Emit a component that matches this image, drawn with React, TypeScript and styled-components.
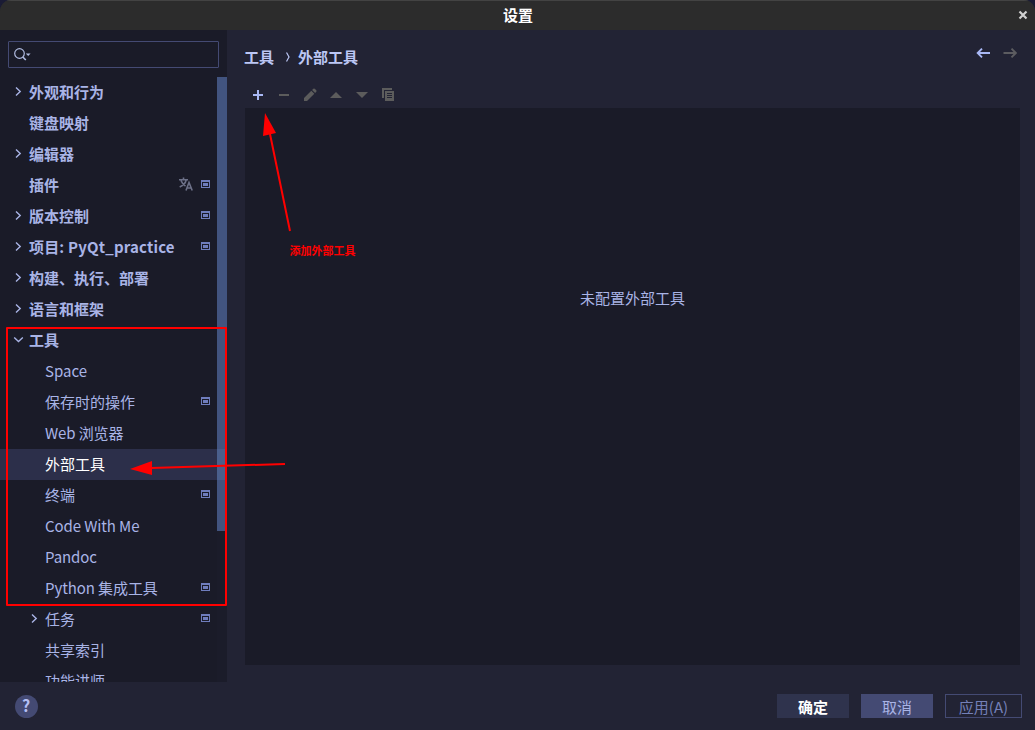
import React from 'react';
import styled, { createGlobalStyle } from 'styled-components';

const Global = createGlobalStyle`
  * { box-sizing: border-box; }
  body { margin: 0; background: #1a1b35; overflow: hidden; }
  svg { display: block; flex: none; }
`;

const Window = styled.div`
  position: relative;
  width: 1035px;
  height: 730px;
  display: flex;
  flex-direction: column;
  overflow: hidden;
  border-radius: 11px 11px 0 0;
  background: #222334;
  color: #a9b4e6;
  font: 15px/31px 'Noto Sans CJK SC', sans-serif;
`;

const TitleBar = styled.header`
  display: grid;
  grid-template-columns: 1fr auto 1fr;
  align-items: center;
  height: 30px;
  flex: none;
  padding: 0 7px 2px 0;
  background: #2c2c2c;
  border-top: 1px solid #434343;
  color: #fff;
  font-weight: 700;
  line-height: 27px;
  svg { justify-self: end; }
`;

const Title = styled.span`
  grid-column: 2;
  padding-left: 8px;
`;

const Body = styled.div`
  display: flex;
  height: 652px;
  flex: none;
`;

const Sidebar = styled.aside`
  width: 227px;
  flex: none;
  padding-top: 11px;
  background: #1a1b28;
  overflow: hidden;
`;

const Search = styled.div`
  display: flex;
  align-items: center;
  width: 211px;
  height: 27px;
  margin: 0 0 9px 8px;
  padding-left: 5px;
  border: 1px solid #444a73;
  border-radius: 1px;
`;

const TreeArea = styled.div`
  display: flex;
  height: 605px;
  overflow: hidden;
`;

const Tree = styled.div`
  width: 217px;
  flex: none;
`;

const Track = styled.div`
  width: 10px;
  height: 605px;
  background: #1b1c2a;
`;

const Thumb = styled.div`
  height: 454px;
  padding-top: 372px;
  background: #42547f;
`;

const ThumbHighlight = styled.div`
  height: 31px;
  background: #4a5f8c;
`;

const Row = styled.div<{ $child?: boolean; $selected?: boolean }>`
  display: flex;
  align-items: center;
  height: 31px;
  padding: 0 7px 0 ${p => (p.$child ? 29 : 13)}px;
  background: ${p => (p.$selected ? '#2c2f4a' : 'transparent')};
  color: ${p => (p.$selected ? '#fff' : '#a9b4e6')};
  font-weight: ${p => (p.$child ? 400 : 700)};
  white-space: nowrap;
`;

const Toggle = styled.span`
  display: flex;
  width: 16px;
  flex: none;
  padding-bottom: 2px;
`;

const Label = styled.span<{ $spacing?: number }>`
  flex: 1;
  padding-bottom: 2px;
  line-height: 29px;
  letter-spacing: ${p => p.$spacing ?? 0}px;
`;

const Marks = styled.span`
  display: flex;
  align-items: center;
  gap: 8px;
  padding-bottom: 3px;
`;

const Content = styled.main`
  display: flex;
  flex-direction: column;
  flex: 1;
  padding: 0 15px 17px 18px;
`;

const Heading = styled.div`
  display: flex;
  align-items: center;
  height: 54px;
  color: #bcc7f5;
  font-weight: 700;
  line-height: 30px;
`;

const Crumb = styled.span`
  margin-left: -1px;
`;

const Separator = styled.span`
  margin: 0 8px 0 12px;
`;

const History = styled.span`
  display: flex;
  gap: 13px;
  margin: 0 3px 8px auto;
`;

const Toolbar = styled.div`
  display: flex;
  gap: 10px;
  height: 24px;
  padding: 3px 0 0 5px;
`;

const Panel = styled.section`
  flex: 1;
  padding-top: 175px;
  background: #1a1b28;
  text-align: center;
  line-height: 30px;
`;

const Footer = styled.footer`
  display: flex;
  align-items: center;
  height: 48px;
  padding: 0 13px 0 15px;
`;

const Help = styled.button`
  display: grid;
  place-items: center;
  width: 23px;
  height: 23px;
  margin-right: auto;
  padding: 0 1px 2px 0;
  border: 0;
  border-radius: 50%;
  background: #444a73;
  color: #b4c0f5;
  font: 700 16px/21px 'Noto Sans CJK SC', sans-serif;
`;

const Button = styled.button<{ $kind: 'default' | 'normal' | 'disabled' }>`
  width: ${p => (p.$kind === 'disabled' ? 77 : 72)}px;
  height: 24px;
  margin-left: 12px;
  padding: 1px 0 0;
  border: ${p => (p.$kind === 'disabled' ? '1px solid #444a73' : '0')};
  background: ${p => ({ default: '#2f334d', normal: '#444a73', disabled: 'transparent' })[p.$kind]};
  color: ${p => ({ default: '#fff', normal: '#a9b4e6', disabled: '#7480b8' })[p.$kind]};
  font: ${p => (p.$kind === 'default' ? 700 : 400)} 15px/22px 'Noto Sans CJK SC', sans-serif;
`;

const SelectionFrame = styled.div`
  position: absolute;
  left: 6px;
  top: 327px;
  width: 221px;
  height: 279px;
  border: 2px solid #f00;
  border-radius: 1px;
`;

const Arrows = styled.svg`
  position: absolute;
  left: 0;
  top: 0;
`;

const Note = styled.div`
  position: absolute;
  left: 289.5px;
  top: 242px;
  color: #f00;
  font: 700 11px/16px 'Noto Sans CJK SC', sans-serif;
`;

const Chevron = ({ open }: { open?: boolean }) => (
  <svg width="11" height="11" viewBox="0 0 11 11" fill="none" stroke="#a9b4e6" strokeWidth="1.4">
    <path d={open ? 'M1.2 3.5 5.5 7.5 9.8 3.5' : 'M3 1.5 7.2 5.5 3 9.5'} />
  </svg>
);

const ProjectMark = () => (
  <svg width="9" height="8" viewBox="0 0 9 8" fill="#6f7dbd">
    <path fillRule="evenodd" d="M0 0h9v8H0zM1 2v5h7V2z" />
    <path d="M2 3h5v3H2z" />
  </svg>
);

const LanguageMark = () => (
  <svg width="14" height="14" viewBox="0 0 14 14" fill="none" stroke="#6c7087" strokeWidth="1.6">
    <path d="M0 2.7h9M4.500.500v2.200M2 3.500c1 3 3 4.500 4.500 5.500M7.200 3C6.500 6 4 8.500.700 10M7 13.500 10 5.500 13.200 13.500M8.300 11h4" />
  </svg>
);

type Item = {
  text: string;
  child?: boolean;
  toggle?: 'open' | 'closed';
  mark?: boolean;
  language?: boolean;
  selected?: boolean;
  spacing?: number;
};

const items: Item[] = [
  { text: '外观和行为', toggle: 'closed' },
  { text: '键盘映射' },
  { text: '编辑器', toggle: 'closed' },
  { text: '插件', mark: true, language: true },
  { text: '版本控制', toggle: 'closed', mark: true },
  { text: '项目: PyQt_practice', toggle: 'closed', mark: true, spacing: 0.18 },
  { text: '构建、执行、部署', toggle: 'closed' },
  { text: '语言和框架', toggle: 'closed' },
  { text: '工具', toggle: 'open' },
  { text: 'Space', child: true },
  { text: '保存时的操作', child: true, mark: true },
  { text: 'Web 浏览器', child: true, spacing: -0.1 },
  { text: '外部工具', child: true, selected: true },
  { text: '终端', child: true, mark: true },
  { text: 'Code With Me', child: true, spacing: -0.1 },
  { text: 'Pandoc', child: true, spacing: -0.1 },
  { text: 'Python 集成工具', child: true, mark: true, spacing: -0.08 },
  { text: '任务', child: true, toggle: 'closed', mark: true },
  { text: '共享索引', child: true },
  { text: '功能讲师', child: true },
];

export default function App() {
  return (
    <>
      <Global />
      <Window>
        <TitleBar>
          <Title>设置</Title>
          <svg width="10" height="10" viewBox="0 0 10 10" stroke="#d0d0d0" strokeWidth="2.2">
            <path d="M1.500 1.500 8.500 8.500M8.500 1.500 1.500 8.500" />
          </svg>
        </TitleBar>
        <Body>
          <Sidebar>
            <Search>
              <svg width="17" height="14" viewBox="0 0 17 14" fill="none" stroke="#b0bbe0" strokeWidth="1.200">
                <circle cx="5.500" cy="5.500" r="4.800" />
                <path d="m8.800 9 3 3" strokeWidth="1.700" />
                <path d="M11.800 5.500h4.800L14.200 8z" fill="#b0bbe0" stroke="none" />
              </svg>
            </Search>
            <TreeArea>
              <Tree>
                {items.map(item => (
                  <Row key={item.text} $child={item.child} $selected={item.selected}>
                    <Toggle>{item.toggle && <Chevron open={item.toggle === 'open'} />}</Toggle>
                    <Label $spacing={item.spacing}>{item.text}</Label>
                    <Marks>
                      {item.language && <LanguageMark />}
                      {item.mark && <ProjectMark />}
                    </Marks>
                  </Row>
                ))}
              </Tree>
              <Track>
                <Thumb><ThumbHighlight /></Thumb>
              </Track>
            </TreeArea>
          </Sidebar>
          <Content>
            <Heading>
              <Crumb>工具</Crumb>
              <Separator>
                <svg width="4" height="10" viewBox="0 0 4 10" fill="none" stroke="#bcc7f5" strokeWidth="1.200">
                  <path d="M.5.500 3 5 .5 9.500" />
                </svg>
              </Separator>
              <span>外部工具</span>
              <History>
                <svg width="14" height="10" viewBox="0 0 14 10" fill="none" stroke="#a9b8f5" strokeWidth="1.900">
                  <path d="M14 5H2M6 .700 1.700 5l4.300 4.300" />
                </svg>
                <svg width="14" height="10" viewBox="0 0 14 10" fill="none" stroke="#5c5c60" strokeWidth="1.900">
                  <path d="M.500 5h12M8.500.700 12.800 5 8.500 9.300" />
                </svg>
              </History>
            </Heading>
            <Toolbar>
              <svg width="16" height="16" viewBox="0 0 16 16" fill="#a9b8f5"><path d="M7 3h2v4h4v2H9v4H7V9H3V7h4z" /></svg>
              <svg width="16" height="16" viewBox="0 0 16 16" fill="#5c5c5c"><path d="M3 7h10v2H3z" /></svg>
              <svg width="16" height="16" viewBox="0 0 16 16" fill="#5c5c5c"><path d="m2 11 7.300-7.300 3 3L5 14H2zM10.100 2.900l1.200-1.200q.7-.5 1.400 0l1.600 1.600q.5.700 0 1.400l-1.200 1.200z" /></svg>
              <svg width="16" height="16" viewBox="0 0 16 16" fill="#5c5c5c"><path d="M2 11h12L8 5z" /></svg>
              <svg width="16" height="16" viewBox="0 0 16 16" fill="#5c5c5c"><path d="M2 5h12l-6 6z" /></svg>
              <svg width="16" height="16" viewBox="0 0 16 16" fill="#5c5c5c"><path d="M2 1h10v2H4v8H2z" /><path fillRule="evenodd" d="M5 4h9v10H5zM7 6v1h5V6zM7 8v1h5V8zM7 10v1h5v-1z" /></svg>
            </Toolbar>
            <Panel>未配置外部工具</Panel>
          </Content>
        </Body>
        <Footer>
          <Help>?</Help>
          <Button $kind="default">确定</Button>
          <Button $kind="normal">取消</Button>
          <Button $kind="disabled">应用(A)</Button>
        </Footer>
        <SelectionFrame />
        <Arrows width="300" height="490" viewBox="0 0 300 490" fill="#f00" stroke="#f00">
          <path d="M290 231 270 134M285 464l-134 4" strokeWidth="2" />
          <path d="m265 113 11 20-13 3zM130 469l22-8v14z" stroke="none" />
        </Arrows>
        <Note>添加外部工具</Note>
      </Window>
    </>
  );
}
